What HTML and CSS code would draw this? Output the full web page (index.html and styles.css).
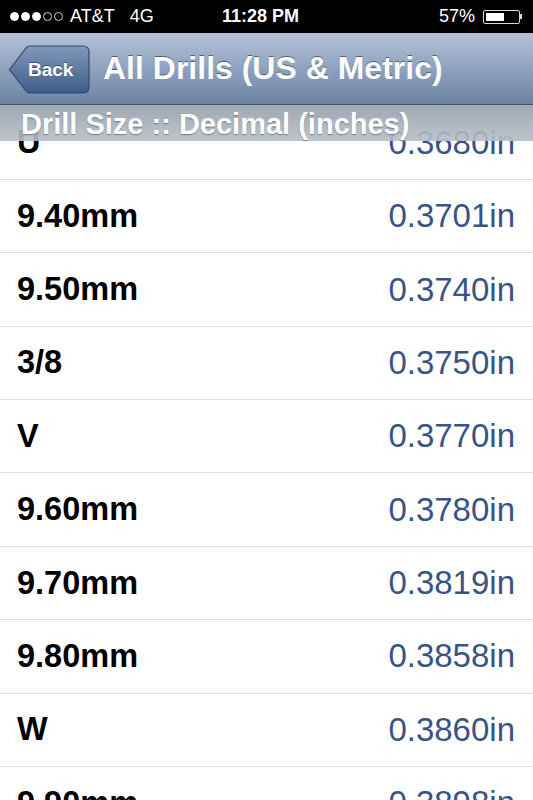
FILE: index.html
```html
<!DOCTYPE html>
<html lang="en">
<head>
    <meta charset="UTF-8">
    <meta name="viewport" content="width=device-width, initial-scale=1.0">
    <title>All Drills (US &amp; Metric)</title>
    <link rel="stylesheet" href="styles.css">
</head>
<body>
    <div class="status-bar">
        <div class="status-left">
            <span class="signal">
                <span class="dot full"></span><span class="dot full"></span><span class="dot full"></span><span class="dot"></span><span class="dot"></span>
            </span>
            <span class="carrier">AT&amp;T</span>
            <span class="network">4G</span>
        </div>
        <div class="clock">11:28 PM</div>
        <div class="status-right">
            <span class="percent">57%</span>
            <span class="battery"><span class="battery-level"></span></span>
            <span class="battery-tip"></span>
        </div>
    </div>

    <div class="nav-bar">
        <div class="back-button">
            <svg class="back-shape" width="82" height="49" viewBox="0 0 82 49">
                <defs>
                    <linearGradient id="backGrad" x1="0" y1="0" x2="0" y2="1">
                        <stop offset="0" stop-color="#8299bb"/>
                        <stop offset="1" stop-color="#3e5b89"/>
                    </linearGradient>
                </defs>
                <path d="M1.5 24.5 L18 3 Q19.5 1 22 1 L75 1 Q81 1 81 7 L81 42 Q81 48 75 48 L22 48 Q19.5 48 18 46 Z" fill="url(#backGrad)" stroke="#33496d" stroke-width="1.2"/>
            </svg>
            <span class="back-label">Back</span>
        </div>
        <h1 class="nav-title">All Drills (US &amp; Metric)</h1>
    </div>

    <div class="content">
        <div class="section-header">Drill Size :: Decimal (inches)</div>
        <ul class="drill-list">
            <li class="drill-row"><span class="drill-size">U</span><span class="drill-decimal">0.3680in</span></li>
            <li class="drill-row"><span class="drill-size">9.40mm</span><span class="drill-decimal">0.3701in</span></li>
            <li class="drill-row"><span class="drill-size">9.50mm</span><span class="drill-decimal">0.3740in</span></li>
            <li class="drill-row"><span class="drill-size">3/8</span><span class="drill-decimal">0.3750in</span></li>
            <li class="drill-row"><span class="drill-size">V</span><span class="drill-decimal">0.3770in</span></li>
            <li class="drill-row"><span class="drill-size">9.60mm</span><span class="drill-decimal">0.3780in</span></li>
            <li class="drill-row"><span class="drill-size">9.70mm</span><span class="drill-decimal">0.3819in</span></li>
            <li class="drill-row"><span class="drill-size">9.80mm</span><span class="drill-decimal">0.3858in</span></li>
            <li class="drill-row"><span class="drill-size">W</span><span class="drill-decimal">0.3860in</span></li>
            <li class="drill-row"><span class="drill-size">9.90mm</span><span class="drill-decimal">0.3898in</span></li>
        </ul>
    </div>
</body>
</html>
```

FILE: styles.css
```css
body {
    font-family: "Liberation Sans", Arial, sans-serif;
    margin: 0;
    padding: 0;
    width: 533px;
    height: 800px;
    overflow: hidden;
    background-color: white;
}
.status-bar {
    height: 33px;
    background-color: black;
    color: white;
    display: flex;
    align-items: center;
    justify-content: space-between;
    padding: 0 11px 0 10px;
    font-size: 18px;
    position: relative;
}
.status-left {
    display: flex;
    align-items: center;
}
.signal {
    display: flex;
    gap: 2px;
    margin-right: 7px;
}
.dot {
    width: 9px;
    height: 9px;
    border-radius: 50%;
    border: 1px solid #cfcfcf;
    box-sizing: border-box;
}
.dot.full {
    background-color: white;
    border-color: white;
}
.network {
    margin-left: 15px;
}
.clock {
    position: absolute;
    left: 222px;
    top: 0;
    line-height: 33px;
    font-weight: bold;
}
.status-right {
    display: flex;
    align-items: center;
}
.percent {
    margin-right: 8px;
}
.battery {
    width: 37px;
    height: 14px;
    border: 1px solid #d8d8d8;
    border-radius: 2px;
    padding: 2px;
    box-sizing: border-box;
    display: flex;
}
.battery-level {
    width: 57%;
    background-color: white;
}
.battery-tip {
    width: 2px;
    height: 5px;
    background-color: #d8d8d8;
}
.nav-bar {
    height: 71px;
    background: linear-gradient(#b4c2d6, #8ea2bf 50%, #6b83a4);
    border-bottom: 1px solid #3b4f6c;
    display: flex;
    align-items: center;
    padding-left: 8px;
}
.back-button {
    position: relative;
    width: 82px;
    height: 49px;
    display: flex;
    align-items: center;
    margin-top: 2px;
}
.back-shape {
    position: absolute;
    left: 0;
    top: 0;
}
.back-label {
    position: relative;
    margin-left: 20px;
    color: white;
    font-weight: bold;
    font-size: 19px;
    text-shadow: 0 -1px 0 rgba(0, 0, 0, 0.4);
}
.nav-title {
    margin: 0 0 0 13px;
    color: white;
    font-size: 32px;
    font-weight: bold;
    text-shadow: 0 -1px 0 rgba(0, 0, 0, 0.45);
}
.content {
    position: relative;
}
.section-header {
    position: absolute;
    top: 0;
    left: 0;
    right: 0;
    height: 35px;
    background: linear-gradient(rgba(150, 160, 172, 0.92), rgba(184, 191, 199, 0.9));
    border-top: 1px solid #a3acb7;
    color: white;
    font-size: 29px;
    font-weight: bold;
    line-height: 36px;
    padding-left: 21px;
    text-shadow: 0 1px 1px rgba(70, 80, 90, 0.6);
}
.drill-list {
    list-style: none;
    margin: 0;
    padding: 1.6px 0 0;
}
.drill-row {
    height: 73.375px;
    box-sizing: border-box;
    border-bottom: 1px solid #e0e0e0;
    display: flex;
    align-items: center;
    justify-content: space-between;
    padding: 0 18px 0 17px;
}
.drill-size {
    font-size: 32.5px;
    font-weight: bold;
    color: black;
}
.drill-decimal {
    font-size: 33px;
    color: #385487;
}
```
